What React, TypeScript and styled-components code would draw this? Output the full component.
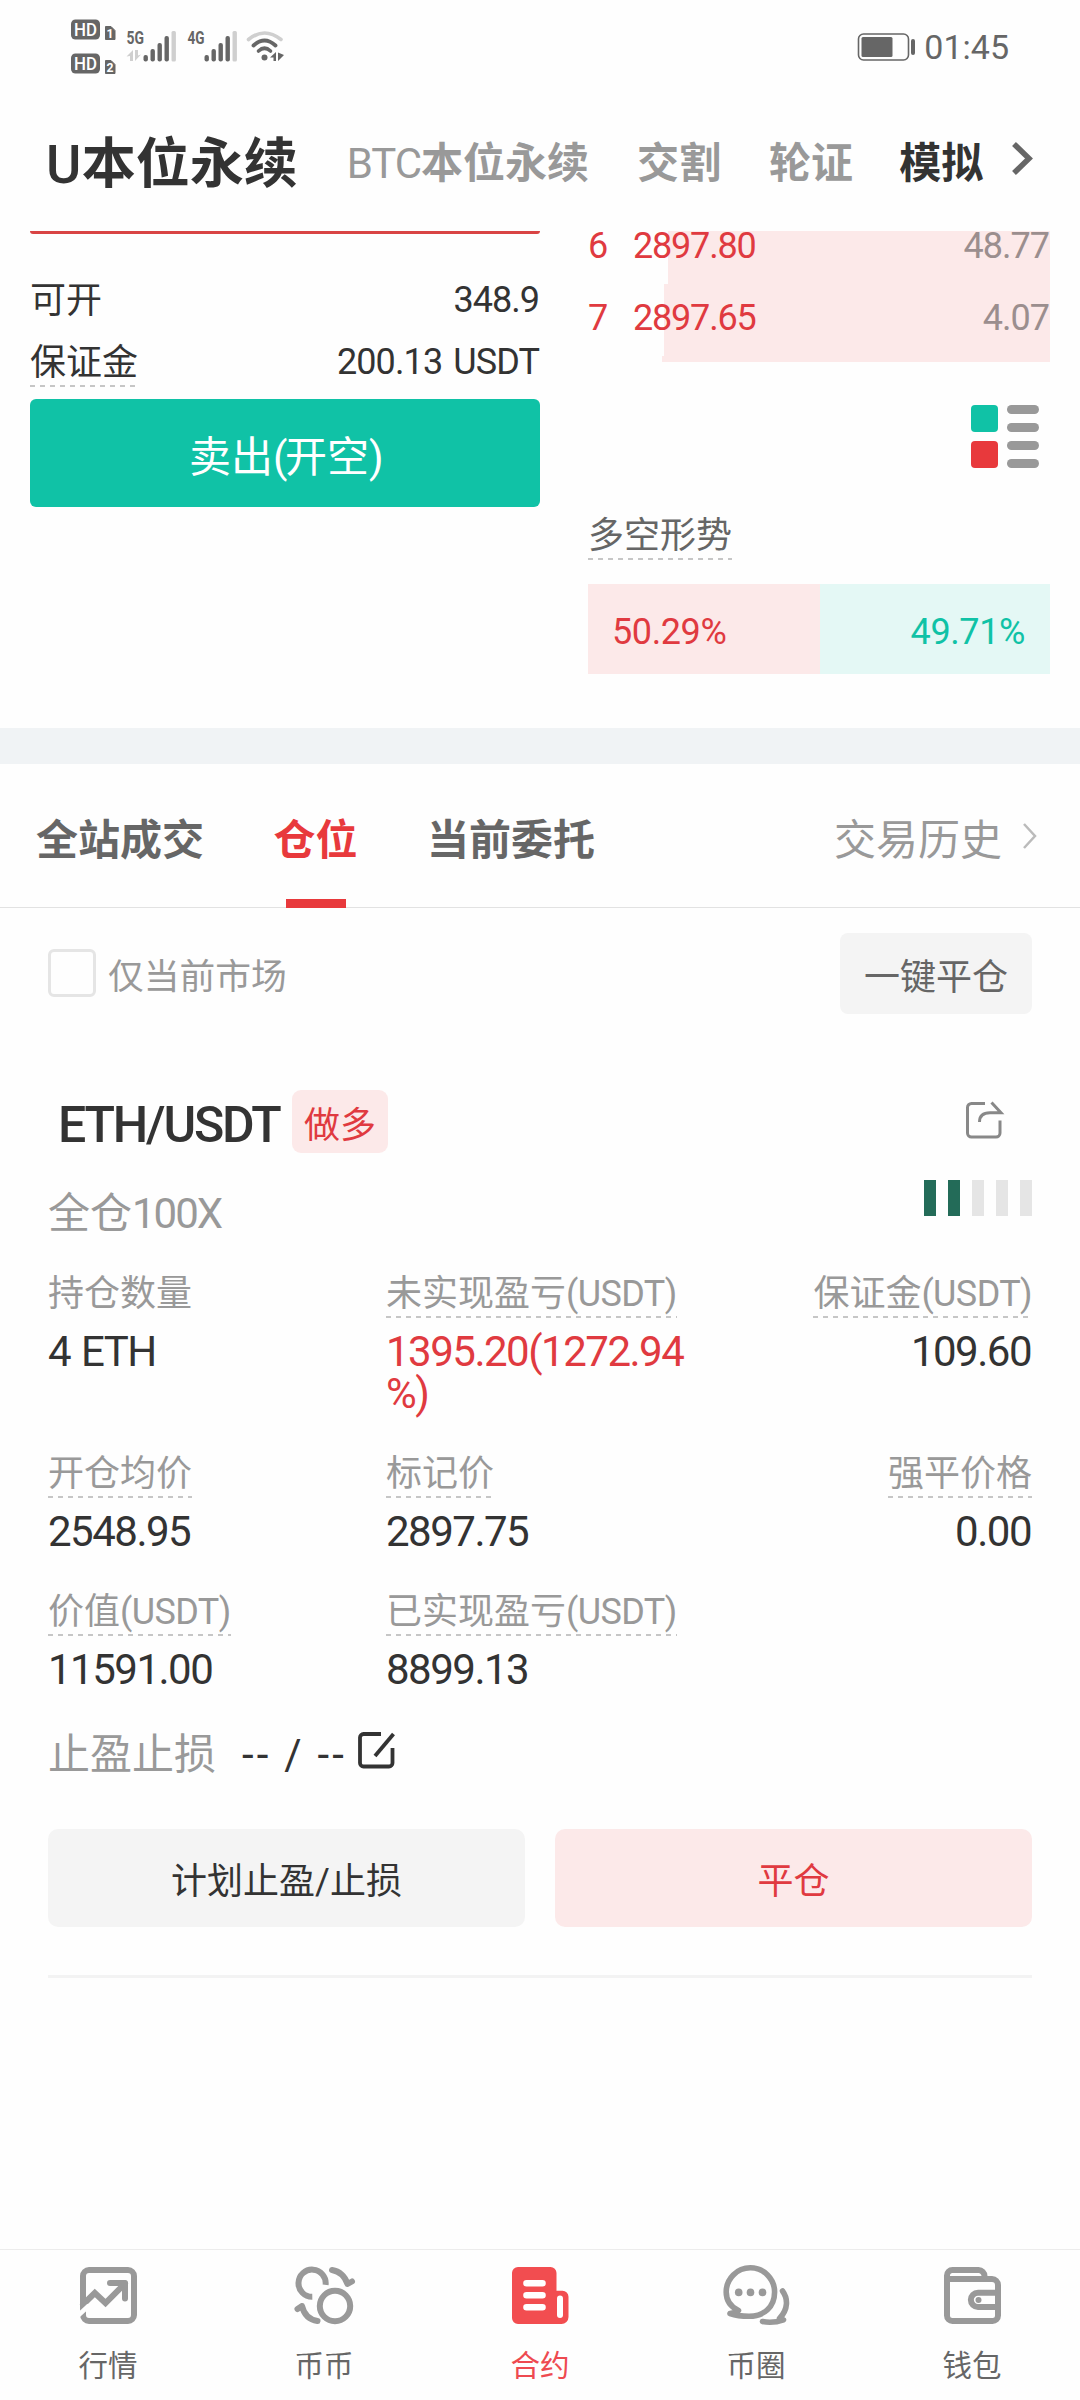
import React from "react";
import styled, { createGlobalStyle } from "styled-components";

const C = {
  ink: "#333333",
  mid: "#666666",
  soft: "#999999",
  red: "#e03a40",
  accent: "#e8393c",
  green: "#10c2a6",
  pink: "#fce9e9",
  mint: "#e4f8f5",
  page: "#fefefe",
};

const GlobalStyle = createGlobalStyle`
  html, body { margin: 0; padding: 0; background: ${C.page}; }
  * { box-sizing: border-box; }
  body {
    font-family: Roboto, "Noto Sans CJK SC", sans-serif;
    color: ${C.ink};
    -webkit-font-smoothing: antialiased;
  }
`;

const Screen = styled.div`
  width: 1080px;
  height: 2400px;
  display: flex;
  flex-direction: column;
  overflow: hidden;
  background: ${C.page};
`;

/* Latin letters and figures, set slightly tight */
const Num = styled.span<{ $ls?: number; $w?: number; $ws?: number }>`
  letter-spacing: ${(p) => p.$ls ?? -1}px;
  word-spacing: ${(p) => p.$ws ?? 0}px;
  font-weight: ${(p) => p.$w ?? 400};
`;

/* ---------- status bar ---------- */
const StatusBar = styled.div`
  flex: none;
  height: 92px;
  display: flex;
  justify-content: space-between;
  padding: 0 71px 0 68px;
`;
const StatusRight = styled.div`
  display: flex;
  align-items: center;
  height: 94px;
  gap: 9px;
`;
const Clock = styled.span`
  font-size: 34px;
  line-height: 40px;
  color: ${C.mid};
`;

const HdTag = ({ y, n }: { y: number; n: string }) => (
  <g>
    <rect x={3} y={y} width={29} height={20} rx={4.5} fill={C.mid} />
    <text x={6} y={y + 16.5} fontSize={18} fontWeight={500} fill="#fff" textLength={23} lengthAdjust="spacingAndGlyphs">HD</text>
    <path d={`M37.500 ${y + 7}h5.500l4 4v9h-9.500z`} fill={C.mid} stroke={C.mid} strokeLinejoin="round" />
    <text x={38.500} y={y + 18.5} fontSize={13} fontWeight={700} fill="#fff" textLength={7} lengthAdjust="spacingAndGlyphs">{n}</text>
  </g>
);

const Bars = ({ x }: { x: number }) => (
  <g>
    {[55, 49, 43, 36].map((y, i) => (
      <rect key={y} x={x + i * 7} y={y} width={4.4} height={61.5 - y} rx={2} fill={C.mid} />
    ))}
    <rect x={x + 28} y={31} width={4.4} height={30.500} rx={1.5} fill="#cfcfcf" />
  </g>
);

const StatusIcons = () => (
  <svg width={220} height={92} viewBox="0 0 220 92" fontFamily="Roboto">
    <HdTag y={19.500} n="1" />
    <HdTag y={53.500} n="2" />
    <text x={58.500} y={44} fontSize={18.500} fontWeight={700} fill={C.mid} textLength={17.500} lengthAdjust="spacingAndGlyphs">5G</text>
    <path d="M58.500 56.500L65 50v11h-3v-5zM67 50h3v5.500l3-1L67 61z" fill="#cfcfcf" />
    <Bars x={75.500} />
    <text x={119.500} y={44} fontSize={18.500} fontWeight={700} fill={C.mid} textLength={17} lengthAdjust="spacingAndGlyphs">4G</text>
    <Bars x={136.500} />
    <g fill="none" strokeLinecap="round">
      <path d="M180.500 39.500Q196.500 26.500 213 39.500" stroke="#cfcfcf" strokeWidth={3.600} />
      <path d="M185.500 45.500Q196.500 35.500 207.500 45.500" stroke={C.mid} strokeWidth={3.800} />
      <path d="M190.500 51Q196.500 45.500 202.500 51" stroke={C.mid} strokeWidth={3.600} />
    </g>
    <circle cx={196.500} cy={57.500} r={3} fill={C.mid} />
    <path d="M202 57.500L208 52v9h-2.500v-3.500zM210 52.500l6 2.500-6 6z" fill={C.mid} />
  </svg>
);

const Battery = () => (
  <svg width={58} height={30} viewBox="0 0 58 30">
    <rect x={1.500} y={2} width={50} height={26} rx={5} fill="none" stroke={C.mid} strokeWidth={1.600} />
    <rect x={4.500} y={5} width={31} height={20} rx={1.500} fill={C.mid} />
    <rect x={54} y={7} width={4} height={16} rx={2} fill={C.mid} />
  </svg>
);

/* ---------- market header ---------- */
const Header = styled.header`
  flex: none;
  height: 139px;
  display: flex;
  align-items: flex-start;
  padding: 36px 0 0 46px;
`;
const Market = styled.span<{ $active?: boolean; $dark?: boolean; $ml?: number }>`
  font-size: ${(p) => (p.$active ? 54 : 42)}px;
  line-height: ${(p) => (p.$active ? 74 : 72)}px;
  font-weight: 700;
  white-space: nowrap;
  margin-left: ${(p) => p.$ml ?? 0}px;
  color: ${(p) => (p.$active || p.$dark ? C.ink : C.soft)};
`;
const HeaderArrow = styled.svg`
  margin: 13px 0 0 27px;
  width: 26px;
  height: 36px;
`;

/* ---------- trade area ---------- */
const Trade = styled.section`
  flex: none;
  height: 497px;
  display: flex;
  justify-content: space-between;
  padding: 0 30px;
`;
const OrderForm = styled.div`
  width: 510px;
  display: flex;
  flex-direction: column;
`;
const BuyEdge = styled.div`
  height: 3px;
  background: #d94444;
  border-radius: 0 0 6px 6px;
  margin-bottom: 47px;
`;
const FormRow = styled.div`
  display: flex;
  justify-content: space-between;
  align-items: flex-start;
  height: 62px;
  padding-right: 1px;
  font-size: 36px;
  line-height: 39px;
`;
const Dashed = styled.span<{ $color?: string }>`
  display: inline-block;
  height: 44px;
  font-size: 36px;
  line-height: 40px;
  white-space: nowrap;
  color: ${(p) => p.$color ?? C.soft};
  background: repeating-linear-gradient(90deg, #c6c6c6 0 5px, transparent 5px 10px) left bottom / 100% 2px no-repeat;
`;
const Plain = styled(Dashed)`
  background: none;
`;
const SellButton = styled.button`
  border: 0;
  height: 108px;
  margin-top: -6px;
  padding: 9px 0 0;
  border-radius: 6px;
  background: ${C.green};
  color: #fff;
  font: 400 42px/1 Roboto, "Noto Sans CJK SC", sans-serif;
`;

const Book = styled.div`
  width: 462px;
  display: flex;
  flex-direction: column;
`;
const BookRow = styled.div<{ $h: number; $from: number; $pt: number }>`
  height: ${(p) => p.$h}px;
  padding: ${(p) => p.$pt}px 1px 0 0;
  display: flex;
  align-items: flex-start;
  font-size: 36px;
  line-height: 30px;
  color: ${C.red};
  background: linear-gradient(90deg, transparent ${(p) => p.$from}px, ${C.pink} ${(p) => p.$from}px);
`;
const Level = styled.span`
  width: 45px;
`;
const Amount = styled.span`
  margin-left: auto;
  color: #9b8e8e;
`;
const BookFoot = styled.div`
  display: flex;
  justify-content: flex-end;
  padding: 43px 11px 0 0;
  height: 154px;
`;
const Trend = styled.div`
  height: 68px;
`;
const Ratio = styled.div`
  display: flex;
  height: 90px;
`;
const RatioPart = styled.div<{ $long?: boolean }>`
  width: ${(p) => (p.$long ? 232 : 230)}px;
  display: flex;
  align-items: center;
  justify-content: ${(p) => (p.$long ? "flex-start" : "flex-end")};
  padding: 6px 25px 0 24px;
  font-size: 36px;
  color: ${(p) => (p.$long ? C.red : C.green)};
  background: ${(p) => (p.$long ? C.pink : C.mint)};
`;

const Band = styled.div`
  flex: none;
  height: 36px;
  background: #f0f3f5;
`;

/* ---------- tabs ---------- */
const Tabs = styled.nav`
  flex: none;
  height: 144px;
  display: flex;
  padding: 0 36px 0 36px;
  border-bottom: 1px solid #e2e2e2;
`;
const Tab = styled.div<{ $on?: boolean }>`
  height: 144px;
  margin-right: 69.5px;
  display: flex;
  flex-direction: column;
  align-items: center;
  justify-content: space-between;
  padding-top: 56px;
  font-size: 42px;
  line-height: 42px;
  font-weight: 700;
  color: ${(p) => (p.$on ? C.accent : C.mid)};
  &::after {
    content: "";
    width: 60px;
    height: 9px;
    background: ${(p) => (p.$on ? C.accent : "transparent")};
  }
`;
const History = styled.div`
  margin-left: auto;
  padding-top: 56px;
  display: flex;
  gap: 18px;
  font-size: 42px;
  line-height: 42px;
  color: ${C.soft};
  svg {
    margin-top: -1px;
  }
`;

/* ---------- position card ---------- */
const Filter = styled.div`
  flex: none;
  display: flex;
  align-items: center;
  height: 81px;
  margin: 25px 48px 0;
`;
const Check = styled.span`
  width: 48px;
  height: 48px;
  border: 3px solid #e5e5e5;
  border-radius: 6px;
  margin: 0 12px 2px 0;
`;
const FilterText = styled.span`
  font-size: 35.75px;
  line-height: 36px;
  color: ${C.soft};
  padding-top: 7px;
`;
const CloseAll = styled.button`
  margin-left: auto;
  width: 192px;
  height: 81px;
  border: 0;
  border-radius: 8px;
  background: #f4f4f4;
  color: ${C.mid};
  padding: 8px 0 0;
  font: 400 36px/1 Roboto, "Noto Sans CJK SC", sans-serif;
`;

const Card = styled.section`
  flex: none;
  margin: 76px 48px 0;
  height: 888px;
  border-bottom: 3px solid #f3f3f3;
  display: flex;
  flex-direction: column;
`;
const Title = styled.div`
  display: flex;
  align-items: center;
  height: 63px;
  padding-right: 27px;
`;
const Pair = styled.span`
  font-size: 50px;
  line-height: 60px;
  font-weight: 500;
  letter-spacing: -2.2px;
  margin: 6px 0 0 10px;
  width: 234px;
  white-space: nowrap;
`;
const Side = styled.span`
  width: 96px;
  height: 63px;
  border-radius: 9px;
  background: ${C.pink};
  color: ${C.red};
  font-size: 36px;
  line-height: 72px;
  text-align: center;
`;
const ShareIcon = styled.svg`
  margin: 0 0 3px auto;
  width: 40px;
  height: 40px;
`;
const Leverage = styled.div`
  display: flex;
  justify-content: space-between;
  height: 121px;
  padding-top: 27px;
`;
const LeverageText = styled.span`
  font-size: 42px;
  line-height: 42px;
  color: ${C.soft};
  padding-top: 13px;
`;
const Risk = styled.div`
  display: flex;
  gap: 12px;
`;
const RiskBar = styled.span<{ $on: boolean }>`
  width: 12px;
  height: 36px;
  background: ${(p) => (p.$on ? "#236b58" : "#e5e5e5")};
`;
const Stats = styled.div`
  display: grid;
  grid-template-columns: 338px 306px 1fr;
  row-gap: 39px;
`;
const Stat = styled.div<{ $right?: boolean }>`
  display: flex;
  flex-direction: column;
  align-items: ${(p) => (p.$right ? "flex-end" : "flex-start")};
`;
const Value = styled.span<{ $red?: boolean; $right?: boolean }>`
  margin: 13px ${(p) => (p.$right ? 1 : 0)}px 0 0;
  font-size: 42px;
  line-height: 42px;
  letter-spacing: -1.5px;
  word-spacing: 2px;
  line-break: anywhere;
  color: ${(p) => (p.$red ? C.red : C.ink)};
`;
const StopRow = styled.div`
  display: flex;
  align-items: center;
  height: 42px;
  margin-top: 41px;
  font-size: 42px;
  line-height: 42px;
  svg {
    margin-bottom: 4px;
  }
`;
const StopLabel = styled.span`
  color: ${C.soft};
  margin-right: 26px;
  padding-top: 4px;
`;
const StopValue = styled.span`
  letter-spacing: 3.2px;
  word-spacing: -1px;
  padding-top: 3px;
`;
const Actions = styled.div`
  display: flex;
  gap: 30px;
  margin-top: 55px;
`;
const Action = styled.button<{ $red?: boolean }>`
  flex: 1;
  height: 98px;
  border: 0;
  border-radius: 10px;
  padding: 8px 0 0;
  background: ${(p) => (p.$red ? C.pink : "#f4f4f4")};
  color: ${(p) => (p.$red ? C.red : C.ink)};
  font: 400 36px/1 Roboto, "Noto Sans CJK SC", sans-serif;
`;

/* ---------- bottom navigation ---------- */
const BottomNav = styled.nav`
  flex: none;
  margin-top: auto;
  height: 151px;
  border-top: 1px solid #ececec;
  display: flex;
`;
const NavItem = styled.div<{ $on?: boolean }>`
  flex: 1;
  display: flex;
  flex-direction: column;
  align-items: center;
  padding-top: 10px;
  font-size: 29.5px;
  line-height: 30px;
  color: ${(p) => (p.$on ? "#ee4a50" : C.mid)};
  svg {
    margin-bottom: 19px;
  }
`;

const NavSvg = ({ children }: { children: React.ReactNode }) => (
  <svg width={72} height={72} viewBox="0 0 72 72" fill="none" stroke={C.soft} strokeWidth={6} strokeLinecap="round" strokeLinejoin="round">
    {children}
  </svg>
);

const MarketIcon = () => (
  <NavSvg>
    <rect x={11} y={10} width={51} height={51} rx={6} />
    <path d="M11 44.500L22.800 33 33.500 43 53 23.500" strokeLinejoin="miter" />
    <path d="M38 23H53V38.500" />
    <path d="M5 56.500L17 45.500" stroke={C.page} strokeWidth={4.600} strokeLinecap="butt" />
  </NavSvg>
);
const SwapIcon = () => (
  <NavSvg>
    <circle cx={47} cy={46} r={15.200} />
    <path d="M37.600 24.800A13.600 13.600 0 1 0 24.300 36.800" strokeLinecap="butt" />
    <path d="M44 10Q55.500 12 59.500 24L64 21.500" />
    <path d="M29.500 61Q17 59 14 46L9.500 49" />
  </NavSvg>
);
const ContractIcon = () => (
  <NavSvg>
    <path d="M14 7H46.500a6 6 0 0 1 6 6V30.700H58.500a6 6 0 0 1 6 6V57a7 7 0 0 1-7 7H14a6 6 0 0 1-6-6V13a6 6 0 0 1 6-6z" fill="#f24d50" stroke="none" />
    <path d="M22.500 23.300H38.500M22.500 35.300H38.500M22.500 47.300H38.500" stroke="#fff" strokeWidth={6.600} />
    <path d="M56 38.500V55" stroke="#fff" />
  </NavSvg>
);
const ChatIcon = () => (
  <NavSvg>
    <path d="M18.500 50.500C10 46.500 6.200 40 6.200 32A24.200 24.200 0 0 1 54.600 32C54.600 47 44 56.300 29 56.300Q18 56.300 10 53.500Q16.500 52.500 16.500 50" strokeWidth={5.600} />
    <g fill={C.soft} stroke="none">
      <circle cx={18.700} cy={32.400} r={3.800} />
      <circle cx={30.500} cy={32.400} r={3.800} />
      <circle cx={42.500} cy={32.400} r={3.800} />
    </g>
    <path d="M62.500 31C68 38.500 68.500 49 59.500 58.500L63.500 59.800Q53 63.500 42.500 61.500" strokeWidth={5.600} />
  </NavSvg>
);
const WalletIcon = () => (
  <NavSvg>
    <path d="M11 19H56a6 6 0 0 1 6 6V55.500a5.500 5.500 0 0 1-5.500 5.500H16.500a5.500 5.500 0 0 1-5.500-5.500V15.500a5.500 5.500 0 0 1 5.500-5.500H42.500a6 6 0 0 1 6 6V18" />
    <path d="M62 32.700H42a7 7 0 0 0 0 14.300H62" />
    <circle cx={42.500} cy={40} r={3} fill={C.soft} stroke="none" />
  </NavSvg>
);

const stats = [
  { label: "持仓数量", value: "4 ETH", plain: true },
  { label: "未实现盈亏", unit: true, value: "1395.20(1272.94%)", red: true },
  { label: "保证金", unit: true, value: "109.60", right: true },
  { label: "开仓均价", value: "2548.95" },
  { label: "标记价", value: "2897.75" },
  { label: "强平价格", value: "0.00", right: true },
  { label: "价值", unit: true, value: "11591.00" },
  { label: "已实现盈亏", unit: true, value: "8899.13" },
];

export default function App() {
  return (
    <>
      <GlobalStyle />
      <Screen>
        <StatusBar>
          <StatusIcons />
          <StatusRight>
            <Battery />
            <Clock>01:45</Clock>
          </StatusRight>
        </StatusBar>

        <Header>
          <Market $active><Num $w={500} $ls={0.3}>U</Num>本位永续</Market>
          <Market $ml={49}><Num $ls={-1}>BTC</Num>本位永续</Market>
          <Market $ml={48}>交割</Market>
          <Market $ml={48}>轮证</Market>
          <Market $ml={46} $dark>模拟</Market>
          <HeaderArrow viewBox="0 0 26 36">
            <path d="M4 3L19 17.500 4 32" fill="none" stroke={C.mid} strokeWidth={5.500} />
          </HeaderArrow>
        </Header>

        <Trade>
          <OrderForm>
            <BuyEdge />
            <FormRow>
              <Plain $color={C.ink}>可开</Plain>
              <Num>348.9</Num>
            </FormRow>
            <FormRow>
              <Dashed $color={C.ink}>保证金</Dashed>
              <Num $ls={-0.9} $ws={3}>200.13 USDT</Num>
            </FormRow>
            <SellButton>卖出<Num $ls={-2.5}>(</Num>开空<Num $ls={-2.5}>)</Num></SellButton>
          </OrderForm>
          <Book>
            <BookRow $h={53} $from={80} $pt={0}>
              <Level>6</Level>
              <Num $ls={-1.2}>2897.80</Num>
              <Amount><Num>48.77</Num></Amount>
            </BookRow>
            <BookRow $h={72} $from={76} $pt={19}>
              <Level>7</Level>
              <Num $ls={-1.2}>2897.65</Num>
              <Amount><Num>4.07</Num></Amount>
            </BookRow>
            <BookRow $h={6} $from={74} $pt={0} />
            <BookFoot>
              <svg width={68} height={63} viewBox="0 0 68 63">
                <rect x={0} y={0} width={27} height={27} rx={4} fill={C.green} />
                <rect x={0} y={36} width={27} height={27} rx={4} fill={C.accent} />
                {[0, 18, 36, 54].map((y) => (
                  <rect key={y} x={36} y={y} width={32} height={9} rx={4.500} fill={C.soft} />
                ))}
              </svg>
            </BookFoot>
            <Trend>
              <Dashed $color={C.mid}>多空形势</Dashed>
            </Trend>
            <Ratio>
              <RatioPart $long><Num $ls={-0.4}>50.29%</Num></RatioPart>
              <RatioPart><Num $ls={-0.4}>49.71%</Num></RatioPart>
            </Ratio>
          </Book>
        </Trade>

        <Band />

        <Tabs>
          <Tab>全站成交</Tab>
          <Tab $on>仓位</Tab>
          <Tab>当前委托</Tab>
          <History>
            交易历史
            <svg width={24} height={36} viewBox="0 0 24 36">
              <path d="M4 5L15 17 4 29" fill="none" stroke="#bbb" strokeWidth={2.500} />
            </svg>
          </History>
        </Tabs>

        <Filter>
          <Check />
          <FilterText>仅当前市场</FilterText>
          <CloseAll>一键平仓</CloseAll>
        </Filter>

        <Card>
          <Title>
            <Pair>ETH/USDT</Pair>
            <Side>做多</Side>
            <ShareIcon viewBox="0 0 40 40" fill="none" stroke="#888" strokeWidth={3}>
              <path d="M20 3.500H6.500a4 4 0 0 0-4 4V33a4 4 0 0 0 4 4H31a4 4 0 0 0 4-4V20.500" />
              <path d="M26.500 2.500L36 12.800H25Q14.500 12.800 14.500 22" />
            </ShareIcon>
          </Title>
          <Leverage>
            <LeverageText>全仓<Num $ls={-2}>100X</Num></LeverageText>
            <Risk>
              {[1, 2, 3, 4, 5].map((n) => <RiskBar key={n} $on={n < 3} />)}
            </Risk>
          </Leverage>
          <Stats>
            {stats.map((s) => {
              const Label = s.plain ? Plain : Dashed;
              return (
                <Stat key={s.label} $right={s.right}>
                  <Label>{s.label}{s.unit && <Num $ls={-0.6}>(USDT)</Num>}</Label>
                  <Value $red={s.red} $right={s.right}>{s.value}</Value>
                </Stat>
              );
            })}
          </Stats>
          <StopRow>
            <StopLabel>止盈止损</StopLabel>
            <StopValue>-- / --</StopValue>
            <svg width={50} height={42} viewBox="0 0 50 42" fill="none" stroke={C.ink} strokeWidth={3.800}>
              <path d="M34 4H16.500a3.500 3.500 0 0 0-3.500 3.500V33a3.500 3.500 0 0 0 3.500 3.500H42a3.500 3.500 0 0 0 3.500-3.500V18" />
              <path d="M46.500 4L28 26" />
            </svg>
          </StopRow>
          <Actions>
            <Action>计划止盈/止损</Action>
            <Action $red>平仓</Action>
          </Actions>
        </Card>

        <BottomNav>
          <NavItem><MarketIcon />行情</NavItem>
          <NavItem><SwapIcon />币币</NavItem>
          <NavItem $on><ContractIcon />合约</NavItem>
          <NavItem><ChatIcon />币圈</NavItem>
          <NavItem><WalletIcon />钱包</NavItem>
        </BottomNav>
      </Screen>
    </>
  );
}
